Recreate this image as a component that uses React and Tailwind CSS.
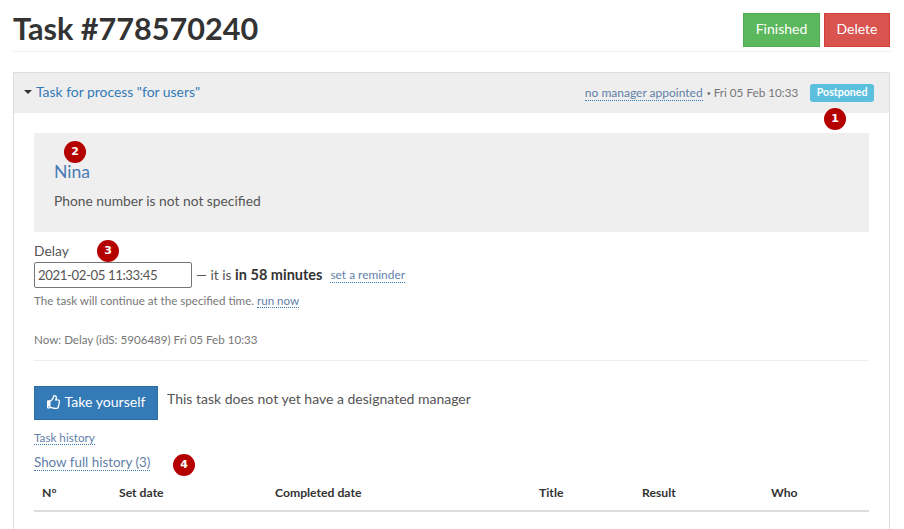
import { FaRegThumbsUp } from 'react-icons/fa'

function Marker({ n, className }) {
  return (
    <span className={`absolute flex items-center justify-center w-[22px] h-[22px] rounded-full bg-[#b50000] text-white text-[11px] font-bold font-['DejaVu_Sans',sans-serif] ${className}`}>
      {n}
    </span>
  )
}

function DottedLink({ children, className = '' }) {
  return (
    <a href="#" className={`text-[#5f7fa8] border-b border-dotted border-[#337ab7] ${className}`}>
      {children}
    </a>
  )
}

export default function App() {
  const columns = [
    { name: 'N°', width: 'w-[77px]' },
    { name: 'Set date', width: 'w-[156px]' },
    { name: 'Completed date', width: 'w-[264px]' },
    { name: 'Title', width: 'w-[103px]' },
    { name: 'Result', width: 'w-[129px]' },
    { name: 'Who', width: 'flex-1' },
  ]

  return (
    <div className="h-[529px] overflow-hidden bg-white px-[13px] font-['Lato','Liberation_Sans',sans-serif] text-[#555]">
      {/* Page header */}
      <div className="flex items-start justify-between h-[52px] pt-[13px] border-b border-[#eee]">
        <h1 className="text-[30.6px] leading-[32px] font-bold text-[#333]">Task #778570240</h1>
        <div className="flex gap-[4px] mr-px">
          <button className="h-[34px] w-[77px] pb-[3px] bg-[#5cb85c] border border-[#4cae4c] text-white text-[14px]">Finished</button>
          <button className="h-[34px] w-[66px] pb-[3px] bg-[#d9534f] border border-[#d43f3a] text-white text-[14px]">Delete</button>
        </div>
      </div>

      {/* Task panel */}
      <div className="mt-5 mr-px border border-[#ddd] border-b-0 h-[480px]">
        <div className="relative flex items-center justify-between h-10 pl-[10px] pr-[15px] bg-[#eee]">
          <a href="#" className="flex items-center gap-[4px] pb-px text-[13.9px] text-[#337ab7]">
            <span className="w-0 h-0 border-x-[4.5px] border-x-transparent border-t-[4.5px] border-t-[#333]" />
            Task for process "for users"
          </a>
          <div className="flex items-center text-[11.7px] text-[#777]">
            <DottedLink className="text-[12px] leading-[15px]">no manager appointed</DottedLink>
            <span className="ml-[4px] text-[7px]">•</span>
            <span className="ml-[3px]">Fri 05 Feb 10:33</span>
            <span className="ml-[12px] px-[6.5px] h-[18px] flex items-center rounded-[3px] bg-[#5bc0de] text-white text-[10.6px] font-bold">Postponed</span>
          </div>
          <Marker n="1" className="right-[43px] top-[35px]" />
        </div>

        <div className="px-5 pt-5">
          <div className="relative h-[99px] bg-[#efefef] px-5 pt-[29px]">
            <Marker n="2" className="left-[30px] top-[8px]" />
            <div className="text-[17.6px] leading-[20px] text-[#4a7ab5]">Nina</div>
            <p className="mt-[9px] text-[13.8px] leading-[20px]">Phone number is not not specified</p>
          </div>

          <div className="relative mt-[10px] text-[13.8px] leading-[18px]">Delay
            <Marker n="3" className="left-[63px] top-[-2px]" />
          </div>
          <div className="flex items-center mt-[2px]">
            <input
              readOnly
              value="2021-02-05 11:33:45"
              className="w-[158px] h-[26px] px-[3px] border border-[#767676] rounded-[2px] text-[13.2px] tracking-[-0.4px] text-[#555] outline-none"
            />
            <span className="ml-[4px] text-[13.8px]">— it is <b className="text-[14.5px] text-[#333]">in 58 minutes</b></span>
            <DottedLink className="ml-[8px] text-[11.9px] leading-[15px]">set a reminder</DottedLink>
          </div>
          <div className="mt-[5px] text-[11.6px] leading-[16px] text-[#777]">
            The task will continue at the specified time. <DottedLink>run now</DottedLink>
          </div>
          <div className="mt-[23px] text-[11.6px] leading-[16px] text-[#777]">Now: Delay (idS: 5906489) Fri 05 Feb 10:33</div>
          <hr className="mt-[12px] border-[#eee]" />

          <div className="flex items-start mt-[25px]">
            <button className="flex items-center justify-center gap-[4px] w-[124px] h-[34px] pb-[3px] bg-[#337ab7] border border-[#2e6da4] text-white text-[14.1px]">
              <FaRegThumbsUp size={14} />
              Take yourself
            </button>
            <span className="ml-[9px] text-[14px] leading-[26px]">This task does not yet have a designated manager</span>
          </div>

          <div className="mt-[9px] text-[11.7px] leading-[16px]">
            <DottedLink>Task history</DottedLink>
          </div>
          <div className="relative mt-[8px] text-[13.4px] leading-[18px]">
            <DottedLink>Show full history (3)</DottedLink>
            <Marker n="4" className="left-[139px] top-[1px]" />
          </div>

          {/* History table */}
          <div className="flex items-center h-[36px] mt-[5px] pl-[8px] pt-[1px] border-b-2 border-[#ddd] text-[12.2px] font-bold text-[#333]">
            {columns.map((col) => (
              <div key={col.name} className={col.width}>{col.name}</div>
            ))}
          </div>
        </div>
      </div>
    </div>
  )
}
